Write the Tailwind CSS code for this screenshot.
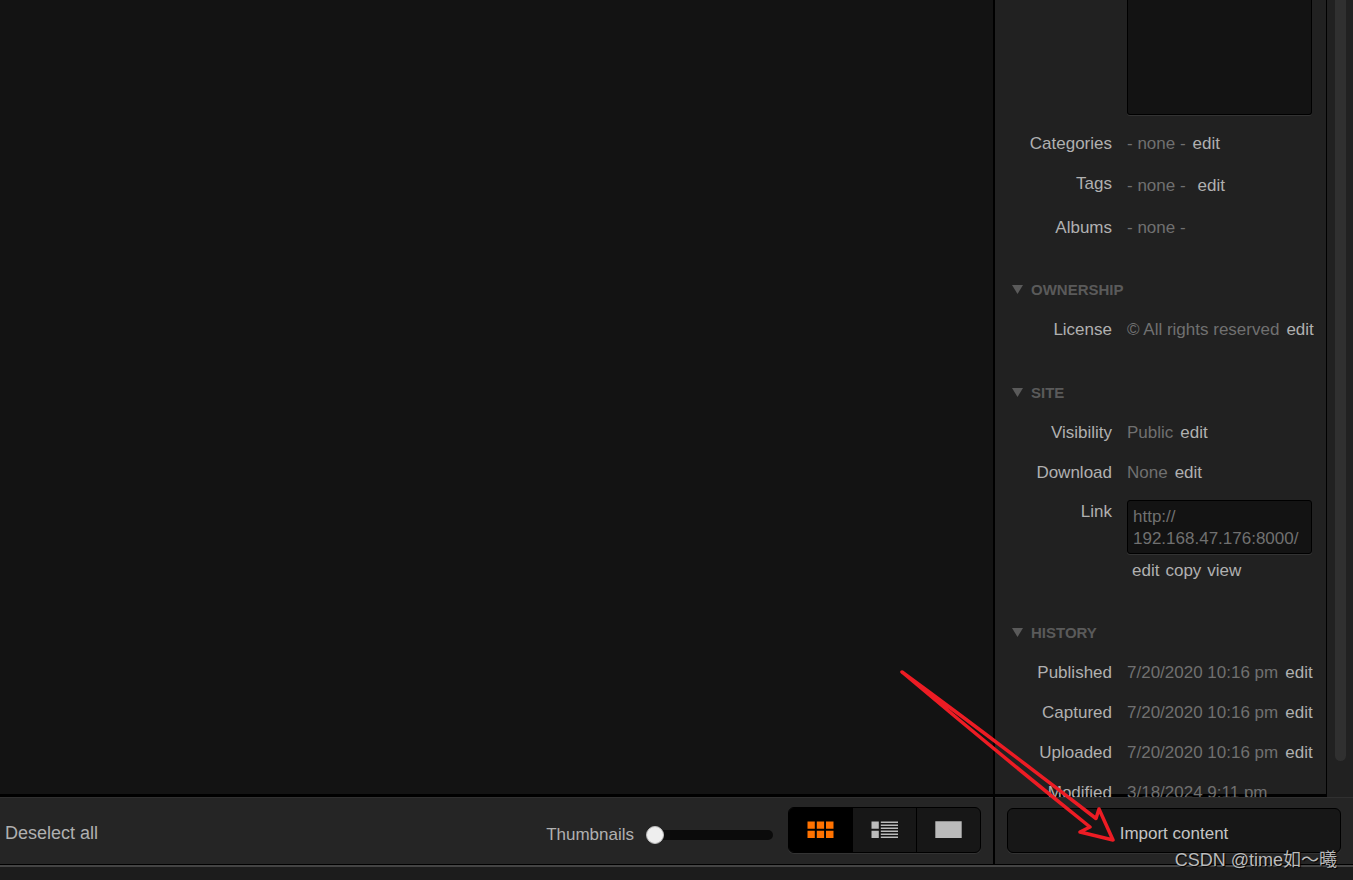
<!DOCTYPE html>
<html lang="en">
<head>
<meta charset="utf-8">
<title>Library</title>
<script src="https://cdn.jsdelivr.net/npm/@tailwindcss/browser@4"></script>
</head>
<body class="relative flex h-screen flex-col overflow-hidden bg-[#1c1c1c] font-['Liberation_Sans',Arial,sans-serif] text-[17px] leading-5 text-[#b0b0b0]">
  <div class="flex min-h-0 flex-1">
    <main class="min-w-0 flex-1 border-b-3 border-black bg-[#131313]"></main>
    <aside class="flex w-[360px] border-l-2 border-black bg-[#212121]">
      <div class="min-w-0 flex-1 overflow-hidden border-r border-black pr-[14px] pl-[17px] shadow-[inset_0_-3px_0_#000]">
        <div class="pl-[115px]">
          <textarea aria-label="Caption" class="block h-[115px] w-full resize-none rounded-b-[3px] border border-t-0 border-black bg-[#131313] shadow-[0_1px_0_#333]"></textarea>
        </div>
        <dl class="mt-[19px] grid grid-cols-[100px_1fr] gap-x-[15px] gap-y-5 whitespace-nowrap">
          <dt class="text-right">Categories</dt>
          <dd class="flex gap-[7px] text-[#707070]">- none -<button class="text-[#b0b0b0]">edit</button></dd>
          <dt class="text-right">Tags</dt>
          <dd class="flex gap-3 py-[2px] text-[#707070]">- none -<button class="text-[#b0b0b0]">edit</button></dd>
          <dt class="text-right">Albums</dt>
          <dd class="text-[#707070]">- none -</dd>
        </dl>
        <h2 class="mt-[42px] flex items-center gap-2 text-[15px] font-bold text-[#5a5a5a]"><svg class="mb-[2px] h-[9px] w-[11px]" viewBox="0 0 11 9" fill="currentColor"><path d="M0 0h11L5.500 9z"/></svg>OWNERSHIP</h2>
        <dl class="mt-5 grid grid-cols-[100px_1fr] gap-x-[15px] gap-y-5 whitespace-nowrap">
          <dt class="text-right">License</dt>
          <dd class="flex gap-[7px] text-[#707070]">© All rights reserved<button class="text-[#b0b0b0]">edit</button></dd>
        </dl>
        <h2 class="mt-[43px] flex items-center gap-2 text-[15px] font-bold text-[#5a5a5a]"><svg class="mb-[2px] h-[9px] w-[11px]" viewBox="0 0 11 9" fill="currentColor"><path d="M0 0h11L5.500 9z"/></svg>SITE</h2>
        <dl class="mt-5 grid grid-cols-[100px_1fr] gap-x-[15px] gap-y-5 whitespace-nowrap">
          <dt class="text-right">Visibility</dt>
          <dd class="flex gap-[7px] text-[#707070]">Public<button class="text-[#b0b0b0]">edit</button></dd>
          <dt class="text-right">Download</dt>
          <dd class="flex gap-[7px] text-[#707070]">None<button class="text-[#b0b0b0]">edit</button></dd>
        </dl>
        <div class="mt-[17px] grid grid-cols-[100px_1fr] gap-x-[15px] whitespace-nowrap">
          <label for="link" class="pt-[2px] text-right">Link</label>
          <div>
            <textarea id="link" class="block h-[54px] w-full resize-none overflow-hidden rounded-[3px] border border-black bg-[#131313] px-[5px] py-[5px] leading-[22px] text-[#707070] shadow-[0_1px_0_#333]">http://
192.168.47.176:8000/</textarea>
            <div class="mt-[7px] flex gap-[6px] pl-[5px]"><button>edit</button><button>copy</button><a href="#">view</a></div>
          </div>
        </div>
        <h2 class="mt-[42px] flex items-center gap-2 text-[15px] font-bold text-[#5a5a5a]"><svg class="mb-[2px] h-[9px] w-[11px]" viewBox="0 0 11 9" fill="currentColor"><path d="M0 0h11L5.500 9z"/></svg>HISTORY</h2>
        <dl class="mt-5 grid grid-cols-[100px_1fr] gap-x-[15px] gap-y-5 whitespace-nowrap">
          <dt class="text-right">Published</dt>
          <dd class="flex gap-[7px] text-[#707070]">7/20/2020 10:16 pm<button class="text-[#b0b0b0]">edit</button></dd>
          <dt class="text-right">Captured</dt>
          <dd class="flex gap-[7px] text-[#707070]">7/20/2020 10:16 pm<button class="text-[#b0b0b0]">edit</button></dd>
          <dt class="text-right">Uploaded</dt>
          <dd class="flex gap-[7px] text-[#707070]">7/20/2020 10:16 pm<button class="text-[#b0b0b0]">edit</button></dd>
          <dt class="text-right">Modified</dt>
          <dd class="text-[#707070]">3/18/2024 9:11 pm</dd>
        </dl>
      </div>
      <div class="w-[26px] pb-9 pl-2"><div class="h-full w-[11px] rounded-b-full bg-[#303030]"></div></div>
    </aside>
  </div>
  <footer class="flex h-[67px] bg-[#252525]">
    <div class="flex min-w-0 flex-1 items-center border-t border-[#303030] pr-3 pl-[5px]">
      <button class="mr-auto pt-1 text-[18px]">Deselect all</button>
      <div class="mr-[15px] flex items-center gap-3 pt-2">
        <label for="size">Thumbnails</label>
        <input id="size" type="range" value="0" class="h-[18px] w-[127px] appearance-none bg-transparent [&::-webkit-slider-runnable-track]:h-[10px] [&::-webkit-slider-runnable-track]:rounded-full [&::-webkit-slider-runnable-track]:bg-[#0b0b0b] [&::-webkit-slider-thumb]:-mt-1 [&::-webkit-slider-thumb]:size-[18px] [&::-webkit-slider-thumb]:appearance-none [&::-webkit-slider-thumb]:rounded-full [&::-webkit-slider-thumb]:border [&::-webkit-slider-thumb]:border-[#bbb] [&::-webkit-slider-thumb]:bg-[#eee]">
      </div>
      <div class="mb-[2px] flex h-[46px] w-[193px] overflow-hidden rounded-md border border-black bg-[#171717] text-[#bbb] shadow-[0_1px_0_#333]">
        <button aria-label="Grid view" class="flex flex-1 items-center justify-center bg-black pb-[2px] text-[#ff7200]">
          <svg class="h-[17px] w-[27px]" viewBox="0 0 27 17" fill="currentColor"><path d="M.5.5h7.300v7.300H.5zM9.800.5h7.300v7.300H9.800zM19 .5h7.500v7.300H19zM.5 9.700h7.300v7.300H.5zM9.800 9.700h7.300v7.300H9.800zM19 9.700h7.500v7.300H19z"/></svg>
        </button>
        <button aria-label="List view" class="flex flex-1 items-center justify-center border-x border-black pb-[2px]">
          <svg class="h-[17px] w-[27px]" viewBox="0 0 27 17" fill="currentColor"><path d="M.5.5h7.300v7.300H.5zM.5 9.700h7.300v7.300H.5zM9.800 .4H27v1.500H9.800zM9.800 3.400H27v1.500H9.800zM9.800 6.400H27v1.500H9.800zM9.800 9.400H27v1.500H9.800zM9.800 12.400H27v1.500H9.800zM9.800 15.400H27v1.500H9.800z"/></svg>
        </button>
        <button aria-label="Single view" class="flex flex-1 items-center justify-center pb-[2px]">
          <svg class="h-[17px] w-[27px]" viewBox="0 0 27 17" fill="currentColor"><path d="M.3.300h26.400V17H.3z"/></svg>
        </button>
      </div>
    </div>
    <div class="w-[360px] border-l-2 border-black">
      <div class="h-full border-t border-[#303030] px-3 pt-[10px]">
        <button class="block h-[45px] w-full rounded-md border border-black bg-[#171717] pt-[6px] text-[#c4c4c4] shadow-[0_1px_0_#333]">Import content</button>
      </div>
    </div>
  </footer>
  <div class="h-4 border-t border-black"><div class="h-[2px] bg-[#444]"></div></div>

  <svg class="pointer-events-none absolute right-[233px] bottom-[35px] h-[180px] w-[220px]" viewBox="0 0 220 180" fill="none" stroke="#ed1c24" stroke-width="3.500" stroke-linejoin="round"><path d="M2 7Q96 76 196 153.500L199 144L213 175L180 167L190 162Q98 88 2 7Z"/></svg>
  <p class="pointer-events-none absolute right-4 bottom-2 font-['Liberation_Sans','Noto_Sans_CJK_SC',sans-serif] text-[18px] leading-6 whitespace-nowrap text-[#bbb] text-shadow-[1px_1px_1px_#000]">CSDN @time如～曦</p>
</body>
</html>
